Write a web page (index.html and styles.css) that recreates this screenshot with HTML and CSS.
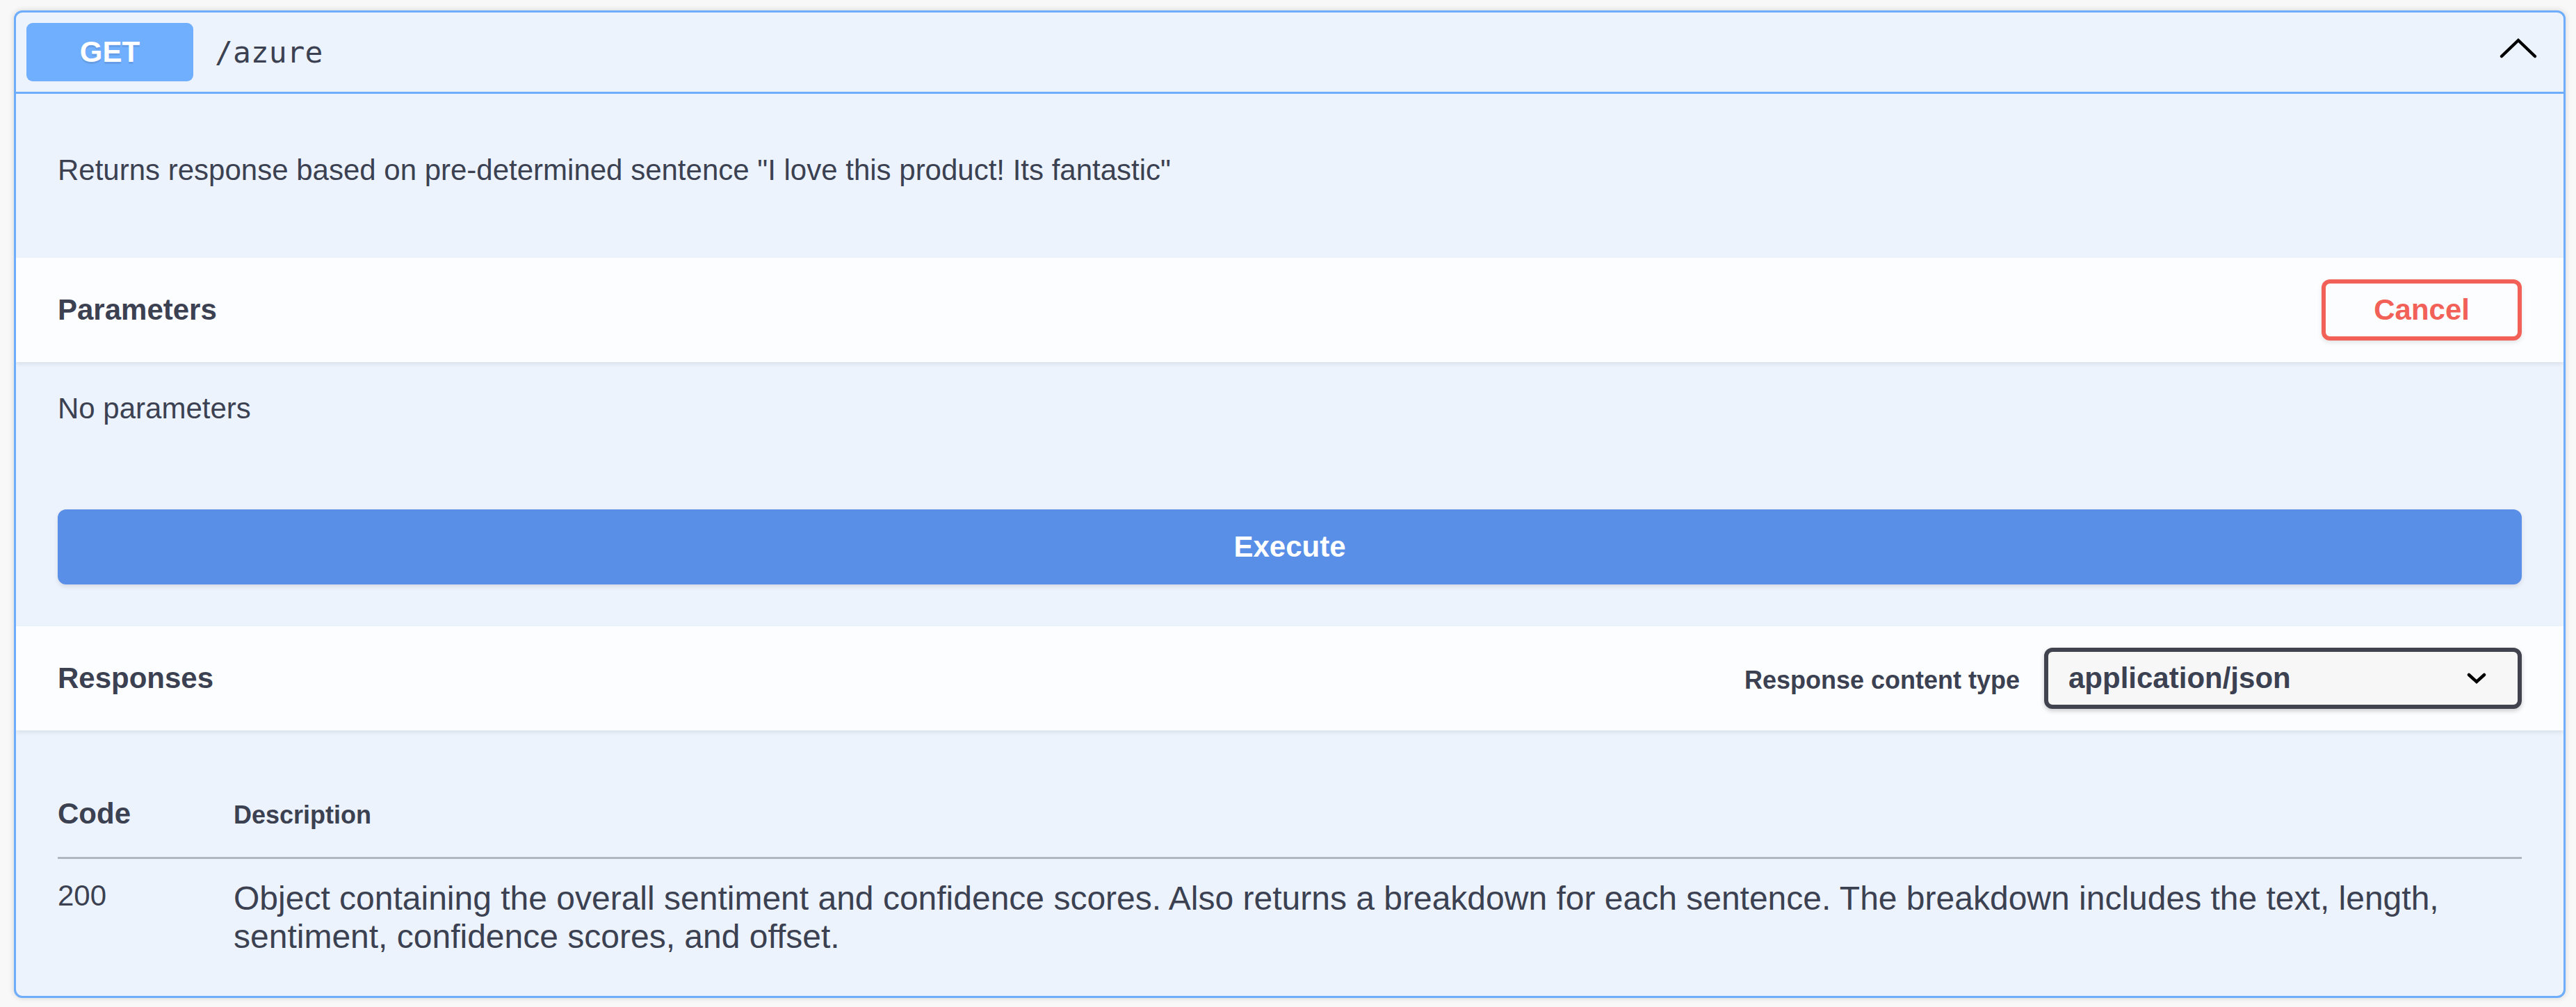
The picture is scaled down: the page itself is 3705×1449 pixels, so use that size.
FILE: index.html
```html
<!DOCTYPE html>
<html lang="en">
<head>
<meta charset="utf-8">
<title>GET /azure</title>
<link rel="stylesheet" href="styles.css">
</head>
<body>
<div class="page">
  <div class="opblock">
    <div class="summary">
      <span class="method">GET</span>
      <span class="path">/azure</span>
      <svg class="arrow" width="60" height="60" viewBox="0 0 60 60"><polyline points="6,36 30,13 54,36" fill="none" stroke="#000" stroke-width="4.5" stroke-linecap="round" stroke-linejoin="miter"/></svg>
    </div>
    <div class="desc">
      <p>Returns response based on pre-determined sentence "I love this product! Its fantastic"</p>
    </div>
    <div class="section-header">
      <h4>Parameters</h4>
      <button class="btn-cancel">Cancel</button>
    </div>
    <div class="no-params">
      <p>No parameters</p>
    </div>
    <div class="execute-wrapper">
      <button class="btn-execute">Execute</button>
    </div>
    <div class="section-header">
      <h4>Responses</h4>
      <label class="media-title">Response content type</label>
      <div class="select">
        <span>application/json</span>
        <svg class="select-arrow" width="28" height="18" viewBox="0 0 28 18"><polyline points="3,4 14,14 25,4" fill="none" stroke="#000" stroke-width="4.5" stroke-linecap="round" stroke-linejoin="miter"/></svg>
      </div>
    </div>
    <div class="responses-inner">
      <table class="responses-table">
        <thead>
          <tr>
            <th class="col-code">Code</th>
            <th class="col-desc">Description</th>
          </tr>
        </thead>
        <tbody>
          <tr>
            <td class="cell-code">200</td>
            <td class="cell-desc">Object containing the overall sentiment and confidence scores. Also returns a breakdown for each sentence. The breakdown includes the text, length, sentiment, confidence scores, and offset.</td>
          </tr>
        </tbody>
      </table>
    </div>
  </div>
</div>
</body>
</html>
```

FILE: styles.css
```css
html, body {
  margin: 0;
  padding: 0;
  background: #f8f8f8;
}

body {
  font-family: "Liberation Sans", Arial, sans-serif;
  color: #3b4151;
}

.page {
  padding: 15px 15px 12px 20px;
}

.opblock {
  border: 3px solid #6dadfc;
  border-radius: 12px;
  background: #ecf3fd;
  box-shadow: 0 0 9px rgba(0, 0, 0, 0.15);
  overflow: hidden;
}

.summary {
  display: flex;
  align-items: center;
  padding: 15px;
  border-bottom: 3px solid #6dadfc;
}

.method {
  display: flex;
  align-items: center;
  justify-content: center;
  width: 240px;
  height: 84px;
  border-radius: 9px;
  background: #70aefe;
  color: #fff;
  font-weight: 700;
  font-size: 42px;
  text-shadow: 0 3px 0 rgba(0, 0, 0, 0.1);
}

.path {
  flex: 1;
  padding: 0 31px;
  font-family: "DejaVu Sans Mono", "Liberation Mono", monospace;
  font-size: 43px;
  font-weight: 400;
  color: #3b4151;
}

.arrow {
  margin-right: 20px;
}

.desc {
  padding: 45px 60px;
  margin-bottom: 15px;
}

.desc p {
  margin: 41px 0 42px;
  font-size: 42px;
  line-height: 48px;
}

.section-header {
  display: flex;
  align-items: center;
  min-height: 150px;
  box-sizing: border-box;
  padding: 24px 60px;
  background: rgba(255, 255, 255, 0.82);
  box-shadow: 0 3px 6px rgba(0, 0, 0, 0.08);
}

.section-header h4 {
  flex: 1;
  margin: 0;
  font-size: 42px;
  font-weight: 700;
  line-height: 48px;
}

.btn-cancel {
  font-family: "Liberation Sans", Arial, sans-serif;
  font-size: 42px;
  font-weight: 700;
  line-height: 48px;
  padding: 14px 69px;
  border: 6px solid #f26157;
  border-radius: 12px;
  background: transparent;
  color: #f26157;
  box-shadow: 0 3px 6px rgba(0, 0, 0, 0.1);
}

.no-params {
  padding: 43px 60px 46px;
  margin-bottom: 15px;
}

.no-params p {
  margin: 0;
  font-size: 42px;
  line-height: 48px;
}

.execute-wrapper {
  padding: 60px;
}

.btn-execute {
  display: block;
  width: 100%;
  font-family: "Liberation Sans", Arial, sans-serif;
  font-size: 42px;
  font-weight: 700;
  line-height: 48px;
  padding: 24px;
  border: 6px solid #5a8fe8;
  border-radius: 12px;
  background: #5a8fe8;
  color: #fff;
  box-shadow: 0 3px 6px rgba(0, 0, 0, 0.1);
}

.media-title {
  font-size: 36px;
  font-weight: 700;
  margin-right: 35px;
  margin-top: 6px;
}

.select {
  display: flex;
  align-items: center;
  width: 687px;
  box-sizing: border-box;
  padding: 15px 0 15px 29px;
  border: 6px solid #41444e;
  border-radius: 12px;
  background: #f7f7f7;
  box-shadow: 0 3px 6px rgba(0, 0, 0, 0.2);
  font-size: 42px;
  font-weight: 700;
  line-height: 46px;
  color: #3b4151;
}

.select-arrow {
  margin-left: auto;
  margin-right: 45px;
}

.responses-inner {
  padding: 60px 60px 58px;
}

.responses-table {
  width: 100%;
  border-collapse: collapse;
}

.responses-table th {
  text-align: left;
  padding: 36px 0;
  font-weight: 700;
  line-height: 48px;
  vertical-align: baseline;
  border-bottom: 3px solid #b1b5bd;
}

.col-code {
  width: 253px;
  font-size: 42px;
}

.col-desc {
  font-size: 36px;
}

.responses-table td {
  padding: 29px 0 0;
  vertical-align: top;
}

.cell-code {
  font-size: 42px;
  line-height: 48px;
  padding-top: 31px;
}

.cell-desc {
  font-size: 48px;
  line-height: 55px;
}
```
